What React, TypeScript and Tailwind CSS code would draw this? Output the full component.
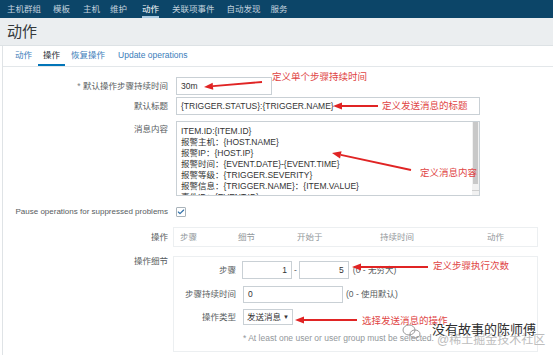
import React from "react";
import { Check } from "lucide-react";

const navItems = [
  { label: "主机群组", cls: "ml-[7px]" },
  { label: "模板", cls: "ml-[12px]" },
  { label: "主机", cls: "ml-[13px]" },
  { label: "维护", cls: "ml-[10px]" },
  { label: "动作", cls: "ml-[15px]", active: true },
  { label: "关联项事件", cls: "ml-[13px]" },
  { label: "自动发现", cls: "ml-[12px]" },
  { label: "服务", cls: "ml-[10px]" },
];

const tabs = [
  { label: "动作" },
  { label: "操作", active: true },
  { label: "恢复操作" },
  { label: "Update operations" },
];

const message = [
  "ITEM.ID:{ITEM.ID}",
  "报警主机：{HOST.NAME}",
  "报警IP：{HOST.IP}",
  "报警时间：{EVENT.DATE}-{EVENT.TIME}",
  "报警等级：{TRIGGER.SEVERITY}",
  "报警信息：{TRIGGER.NAME}：{ITEM.VALUE}",
  "事件ID：{EVENT.ID}",
];

// tail -> head, head gets the point
function Arrow({ x1, y1, x2, y2 }: { x1: number; y1: number; x2: number; y2: number }) {
  const a = Math.atan2(y2 - y1, x2 - x1);
  const len = 9;
  const w = 3.6;
  const bx = x2 - Math.cos(a) * len;
  const by = y2 - Math.sin(a) * len;
  const p1 = `${bx + Math.sin(a) * w},${by - Math.cos(a) * w}`;
  const p2 = `${bx - Math.sin(a) * w},${by + Math.cos(a) * w}`;
  return (
    <g>
      <line x1={x1} y1={y1} x2={bx} y2={by} stroke="#e02424" strokeWidth={1.8} />
      <polygon points={`${x2},${y2} ${p1} ${p2}`} fill="#e02424" />
    </g>
  );
}

function Row({ label, children, top = "" }: { label: React.ReactNode; children: React.ReactNode; top?: string }) {
  return (
    <div className={`flex items-center ${top}`}>
      <div className="w-[165px] shrink-0 text-right text-[#575c60] whitespace-nowrap">{label}</div>
      <div className="ml-[8px]">{children}</div>
    </div>
  );
}

export default function App() {
  return (
    <div className="relative w-[553px] h-[356px] overflow-hidden bg-white text-[8.5px] leading-[11px] font-['Liberation_Sans','Noto_Sans_CJK_SC',sans-serif]">
      {/* top menu */}
      <div className="h-[18px] bg-[#0c4568] flex items-stretch">
        {navItems.map((n) => (
          <div
            key={n.label}
            className={`${n.cls} flex items-center pt-[2px] border-b-2 ${
              n.active ? "border-[#a9c9e0] text-white" : "border-transparent text-[#c3d2de]"
            }`}
          >
            {n.label}
          </div>
        ))}
      </div>

      {/* header */}
      <div className="h-[28px] bg-[#ebeef0] flex items-center pl-[7px] border-b border-[#dde2e5]">
        <span className="text-[15px] leading-[18px] text-[#34383b]">动作</span>
      </div>

      {/* panel */}
      <div className="ml-[2px] border-l border-[#dfe3e6] h-[309px]">
        <div className="h-[21px] border-b border-[#e3e7ea] flex items-stretch pl-[7px] gap-px">
          {tabs.map((t) => (
            <div
              key={t.label}
              className={`px-[5px] flex items-center border-b-2 ${
                t.active ? "border-[#0275b8] text-[#1f2c33]" : "border-transparent text-[#3a7dba]"
              } ${t.label === "Update operations" ? "ml-[2px]" : ""}`}
            >
              {t.label}
            </div>
          ))}
        </div>

        <div className="flex flex-col">
          <Row label={<><span className="text-[#7a7e81]">*</span> 默认操作步骤持续时间</>} top="mt-[10px]">
            <div className="w-[96px] h-[18px] border border-[#c9d0d5] flex items-center pl-[4px] text-[#333]">30m</div>
          </Row>
          <Row label="默认标题" top="mt-[2px]">
            <div className="w-[304px] h-[18px] border border-[#c9d0d5] flex items-center pl-[4px] text-[#333]">
              {"{TRIGGER.STATUS}:{TRIGGER.NAME}"}
            </div>
          </Row>
          <div className="flex items-start mt-[6px]">
            <div className="w-[165px] shrink-0 text-right text-[#575c60] leading-[17px]">消息内容</div>
            <div className="ml-[8px] w-[304px] h-[75px] border border-[#c9d0d5] flex overflow-hidden">
              <div className="flex-1 pl-[4px] pt-[4px] text-[#333] leading-[11px] overflow-hidden">
                {message.map((m) => (
                  <div key={m} className="whitespace-nowrap">{m}</div>
                ))}
              </div>
              <div className="w-[7px] bg-[#f1f1f1] flex flex-col">
                <div className="h-[62px] bg-[#c8c8c8] mx-px" />
                <div className="flex-1" />
                <div className="h-[5px] border-t border-[#d0d0d0]" />
              </div>
            </div>
          </div>

          <div className="flex items-center mt-[11px]">
            <div className="w-[165px] shrink-0 text-right text-[#575c60] whitespace-nowrap text-[8px] leading-[10px]">
              Pause operations for suppressed problems
            </div>
            <div className="ml-[8px] w-[10px] h-[10px] border border-[#a9b3ba] rounded-[1px] flex items-center justify-center bg-white">
              <Check size={8} strokeWidth={3.5} className="text-[#2f6fa8]" />
            </div>
          </div>

          <div className="flex items-center mt-[10px]">
            <div className="w-[165px] shrink-0 text-right text-[#575c60]">操作</div>
            <div className="ml-[5px] w-[365px] h-[20px] border border-[#eceff1] grid grid-cols-[58px_59px_83px_107px_1fr] items-center pl-[6px] text-[#92979b]">
              <span>步骤</span>
              <span>细节</span>
              <span>开始于</span>
              <span>持续时间</span>
              <span>动作</span>
            </div>
          </div>

          <div className="flex items-start mt-[9px]">
            <div className="w-[165px] shrink-0 text-right text-[#575c60]">操作细节</div>
            <div className="ml-[5px] w-[365px] border border-[#eceff1] pt-[4px] pb-[7px] flex flex-col">
              <div className="flex items-center">
                <div className="w-[62px] text-right text-[#575c60]">步骤</div>
                <div className="ml-[6px] flex items-center">
                  <div className="w-[50px] h-[18px] border border-[#c9d0d5] flex items-center justify-end pr-[4px] text-[#333]">1</div>
                  <span className="mx-[2px] text-[#575c60]">-</span>
                  <div className="w-[50px] h-[18px] border border-[#c9d0d5] flex items-center justify-end pr-[4px] text-[#333]">5</div>
                  <span className="ml-[4px] text-[#575c60]">(0 - 无穷大)</span>
                </div>
              </div>
              <div className="flex items-center mt-[7px]">
                <div className="w-[62px] text-right text-[#575c60] whitespace-nowrap">步骤持续时间</div>
                <div className="ml-[7px] flex items-center">
                  <div className="w-[100px] h-[17px] border border-[#c9d0d5] flex items-center pl-[4px] text-[#333]">0</div>
                  <span className="ml-[3px] text-[#575c60]">(0 - 使用默认)</span>
                </div>
              </div>
              <div className="flex items-center mt-[6px]">
                <div className="w-[62px] text-right text-[#575c60]">操作类型</div>
                <div className="ml-[7px] w-[50px] h-[16px] border border-[#c9d0d5] flex items-center justify-between px-[3px] text-[#333]">
                  <span>发送消息</span>
                  <span className="text-[6px]">▼</span>
                </div>
              </div>
              <div className="ml-[69px] mt-[8px] text-[#92979b] whitespace-nowrap">
                * At least one user or user group must be selected.
              </div>
            </div>
          </div>
        </div>
      </div>

      {/* annotations */}
      <svg className="absolute left-0 top-0 pointer-events-none" width={553} height={356}>
        <Arrow x1={262} y1={82} x2={204} y2={87} />
        <Arrow x1={378} y1={106} x2={333} y2={106} />
        <Arrow x1={411} y1={170} x2={332} y2={153} />
        <Arrow x1={428} y1={267} x2={352} y2={267} />
        <Arrow x1={357} y1={320} x2={295} y2={320} />
        <g stroke="#9a9a9a" strokeWidth={1} fill="none">
          <ellipse cx={409} cy={330} rx={6} ry={5} />
          <ellipse cx={415} cy={334} rx={5} ry={4} />
        </g>
      </svg>
      <span className="absolute left-[272px] top-[71px] text-[9.5px] leading-[12px] text-[#e04545] whitespace-nowrap">定义单个步骤持续时间</span>
      <span className="absolute left-[382px] top-[100px] text-[9.5px] leading-[12px] text-[#e04545] whitespace-nowrap">定义发送消息的标题</span>
      <span className="absolute left-[420px] top-[167px] text-[9.5px] leading-[12px] text-[#e04545] whitespace-nowrap">定义消息内容</span>
      <span className="absolute left-[433px] top-[260px] text-[9.5px] leading-[12px] text-[#e04545] whitespace-nowrap">定义步骤执行次数</span>
      <span className="absolute left-[362px] top-[315px] text-[9.5px] leading-[12px] text-[#e04545] whitespace-nowrap">选择发送消息的操作</span>

      {/* watermark */}
      <span className="absolute left-[437px] top-[333px] text-[12px] leading-[14px] text-[#bdbdbd] whitespace-nowrap">@稀土掘金技术社区</span>
      <span className="absolute left-[432px] top-[322px] text-[13px] leading-[16px] text-[#2f2f2f] whitespace-nowrap [text-shadow:0_0_2px_#fff]">没有故事的陈师傅</span>
    </div>
  );
}
